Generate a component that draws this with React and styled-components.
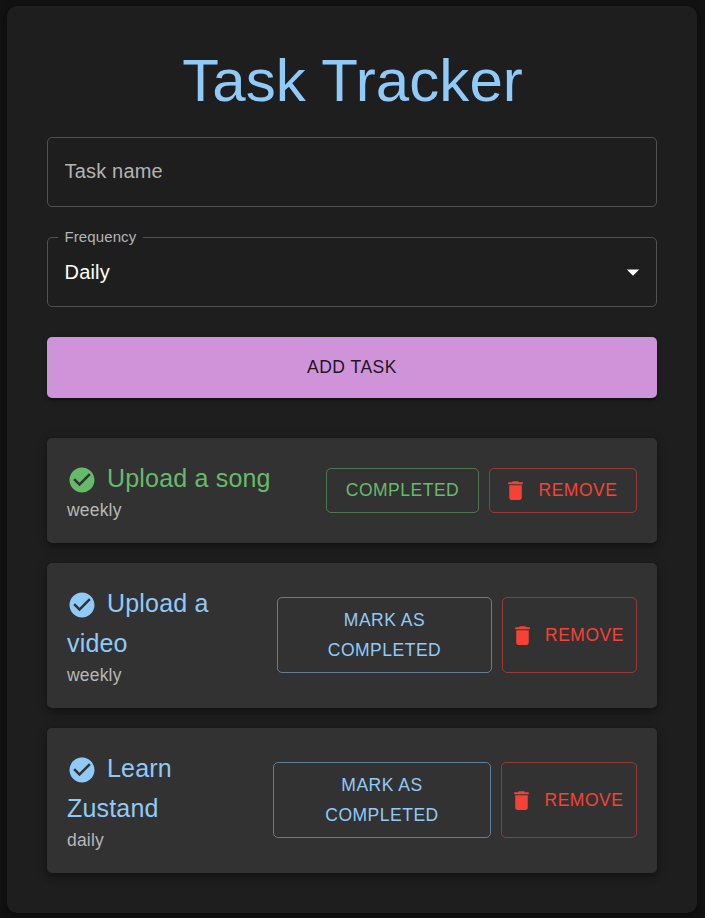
import React from 'react';
import styled, { createGlobalStyle } from 'styled-components';

const GlobalStyle = createGlobalStyle`
  *, *::before, *::after { box-sizing: border-box; }
  body {
    margin: 0;
    background: #121212;
    color: #fff;
    font-family: "Liberation Sans", Arial, sans-serif;
    overflow: hidden;
  }
`;

const palette = {
  primary: { main: '#90caf9', border: 'rgba(144, 202, 249, 0.5)' },
  success: { main: '#66bb6a', border: 'rgba(102, 187, 106, 0.5)' },
  error: { main: '#f44336', border: 'rgba(244, 67, 54, 0.5)' },
};

const Page = styled.main`
  height: 918px;
  padding: 6px 8px 5px 7px;
`;

const Panel = styled.section`
  height: 907px;
  padding: 40px;
  border-radius: 10px;
  background: #1e1e1e;
  box-shadow: 0 2.5px 5px -1.25px rgba(0, 0, 0, 0.2), 0 5px 6.25px rgba(0, 0, 0, 0.14),
    0 1.25px 12.5px rgba(0, 0, 0, 0.12);
`;

const Title = styled.h1`
  margin: 0 0 21px;
  padding-left: 1px;
  color: ${palette.primary.main};
  font-size: 60px;
  font-weight: 400;
  line-height: 70px;
  letter-spacing: 0.05px;
  text-align: center;
`;

const Form = styled.form`
  display: flex;
  flex-direction: column;
  gap: 30px;
  margin-bottom: 40px;
`;

const TextInput = styled.input`
  width: 100%;
  height: 70px;
  padding: 0 16.5px 2px;
  border: 1px solid #515151;
  border-radius: 5px;
  outline: 0;
  background: transparent;
  color: #fff;
  font: 400 20px "Liberation Sans", Arial, sans-serif;
  letter-spacing: 0.00938em;
  &::placeholder { color: #b4b4b4; opacity: 1; }
`;

const SelectField = styled.div`
  position: relative;
  display: flex;
  align-items: center;
  justify-content: space-between;
  height: 70px;
  padding: 0 8px 0 16.5px;
  border: 1px solid #515151;
  border-radius: 5px;
  font-size: 20px;
  letter-spacing: 0.00938em;
`;

const FloatingLabel = styled.span`
  position: absolute;
  top: -11px;
  left: 10px;
  padding: 0 6.5px;
  background: #1e1e1e;
  color: #b4b4b4;
  font-size: 15px;
  line-height: 20px;
  letter-spacing: 0.1px;
`;

const SubmitButton = styled.button`
  height: 61px;
  padding: 0 0 2px;
  border: 0;
  border-radius: 5px;
  background: #ce93d8;
  color: rgba(0, 0, 0, 0.87);
  font: 400 17.5px/30px "Liberation Sans", Arial, sans-serif;
  letter-spacing: 0.02857em;
  text-transform: uppercase;
  box-shadow: 0 3.75px 1.25px -2.5px rgba(0, 0, 0, 0.2), 0 2.5px 2.5px rgba(0, 0, 0, 0.14),
    0 1.25px 6.25px rgba(0, 0, 0, 0.12);
`;

const TaskList = styled.ul`
  display: flex;
  flex-direction: column;
  gap: 20px;
  margin: 0;
  padding: 0;
  list-style: none;
`;

const TaskCard = styled.li`
  display: flex;
  align-items: center;
  justify-content: space-between;
  padding: 20px;
  border-radius: 5px;
  background: #323232;
  box-shadow: 0 2.5px 5px -1.25px rgba(0, 0, 0, 0.2), 0 5px 6.25px rgba(0, 0, 0, 0.14),
    0 1.25px 12.5px rgba(0, 0, 0, 0.12);
`;

const TaskInfo = styled.div`
  flex: 1;
  min-width: 0;
`;

const TaskName = styled.h2`
  margin: 0;
  max-width: ${({ $done }) => ($done ? 'none' : '160px')};
  color: ${({ $tone }) => palette[$tone].main};
  font-size: 25px;
  font-weight: 400;
  line-height: 40px;
  letter-spacing: 0.0075em;
`;

const TaskFrequency = styled.p`
  margin: 0;
  color: #b7b7b7;
  font-size: 17.5px;
  line-height: 25px;
  letter-spacing: 0.01071em;
`;

const Actions = styled.div`
  display: flex;
  gap: 10px;
  height: ${({ $tall }) => ($tall ? 76 : 45)}px;
  margin-bottom: ${({ $tall }) => ($tall ? 1 : 0)}px;
`;

const OutlinedButton = styled.button`
  display: flex;
  align-items: center;
  justify-content: center;
  width: ${({ $width }) => $width}px;
  padding: 0;
  border: 1px solid ${({ $tone }) => palette[$tone].border};
  border-radius: 5px;
  background: transparent;
  color: ${({ $tone }) => palette[$tone].main};
  font: 400 17.5px/30px "Liberation Sans", Arial, sans-serif;
  letter-spacing: 0.02857em;
  text-transform: uppercase;
`;

const ButtonLabel = styled.span`
  max-width: 150px;
  padding-bottom: ${({ $tall }) => ($tall ? 0 : 2)}px;
`;

const Icon = styled.svg`
  flex: none;
  width: ${({ $size }) => $size}px;
  height: ${({ $size }) => $size}px;
  fill: currentColor;
`;

const StatusIcon = styled(Icon)`
  margin-right: 10px;
  vertical-align: middle;
`;

const StartIcon = styled(Icon)`
  margin: 0 10.5px 0 -5.5px;
`;

const tasks = [
  { name: 'Upload a song', frequency: 'weekly', done: true, toggleWidth: 153, removeWidth: 148 },
  { name: 'Upload a video', frequency: 'weekly', done: false, toggleWidth: 215, removeWidth: 135 },
  { name: 'Learn Zustand', frequency: 'daily', done: false, toggleWidth: 218, removeWidth: 136 },
];

function Task({ name, frequency, done, toggleWidth, removeWidth }) {
  const tone = done ? 'success' : 'primary';
  return (
    <TaskCard>
      <TaskInfo>
        <TaskName $tone={tone} $done={done}>
          <StatusIcon $size={30} viewBox="0 0 24 24" aria-hidden="true">
            <path d="M12 2C6.48 2 2 6.48 2 12s4.48 10 10 10 10-4.48 10-10S17.52 2 12 2zm-2 15-5-5 1.41-1.41L10 14.17l7.59-7.59L19 8l-9 9z" />
          </StatusIcon>
          {name}
        </TaskName>
        <TaskFrequency>{frequency}</TaskFrequency>
      </TaskInfo>
      <Actions $tall={!done}>
        <OutlinedButton $tone={tone} $width={toggleWidth}>
          <ButtonLabel $tall={!done}>{done ? 'Completed' : 'Mark as Completed'}</ButtonLabel>
        </OutlinedButton>
        <OutlinedButton $tone="error" $width={removeWidth}>
          <StartIcon $size={25} viewBox="0 0 24 24" aria-hidden="true">
            <path d="M6 19c0 1.1.9 2 2 2h8c1.1 0 2-.9 2-2V7H6v12zM19 4h-3.5l-1-1h-5l-1 1H5v2h14V4z" />
          </StartIcon>
          <ButtonLabel $tall={!done}>Remove</ButtonLabel>
        </OutlinedButton>
      </Actions>
    </TaskCard>
  );
}

export default function App() {
  return (
    <Page>
      <GlobalStyle />
      <Panel>
        <Title>Task Tracker</Title>
        <Form onSubmit={(event) => event.preventDefault()}>
          <TextInput placeholder="Task name" aria-label="Task name" />
          <SelectField role="combobox" aria-label="Frequency">
            <FloatingLabel>Frequency</FloatingLabel>
            Daily
            <Icon $size={30} viewBox="0 0 24 24" aria-hidden="true">
              <path d="M7 10l5 5 5-5z" />
            </Icon>
          </SelectField>
          <SubmitButton type="submit">Add Task</SubmitButton>
        </Form>
        <TaskList>
          {tasks.map((task) => (
            <Task key={task.name} {...task} />
          ))}
        </TaskList>
      </Panel>
    </Page>
  );
}
